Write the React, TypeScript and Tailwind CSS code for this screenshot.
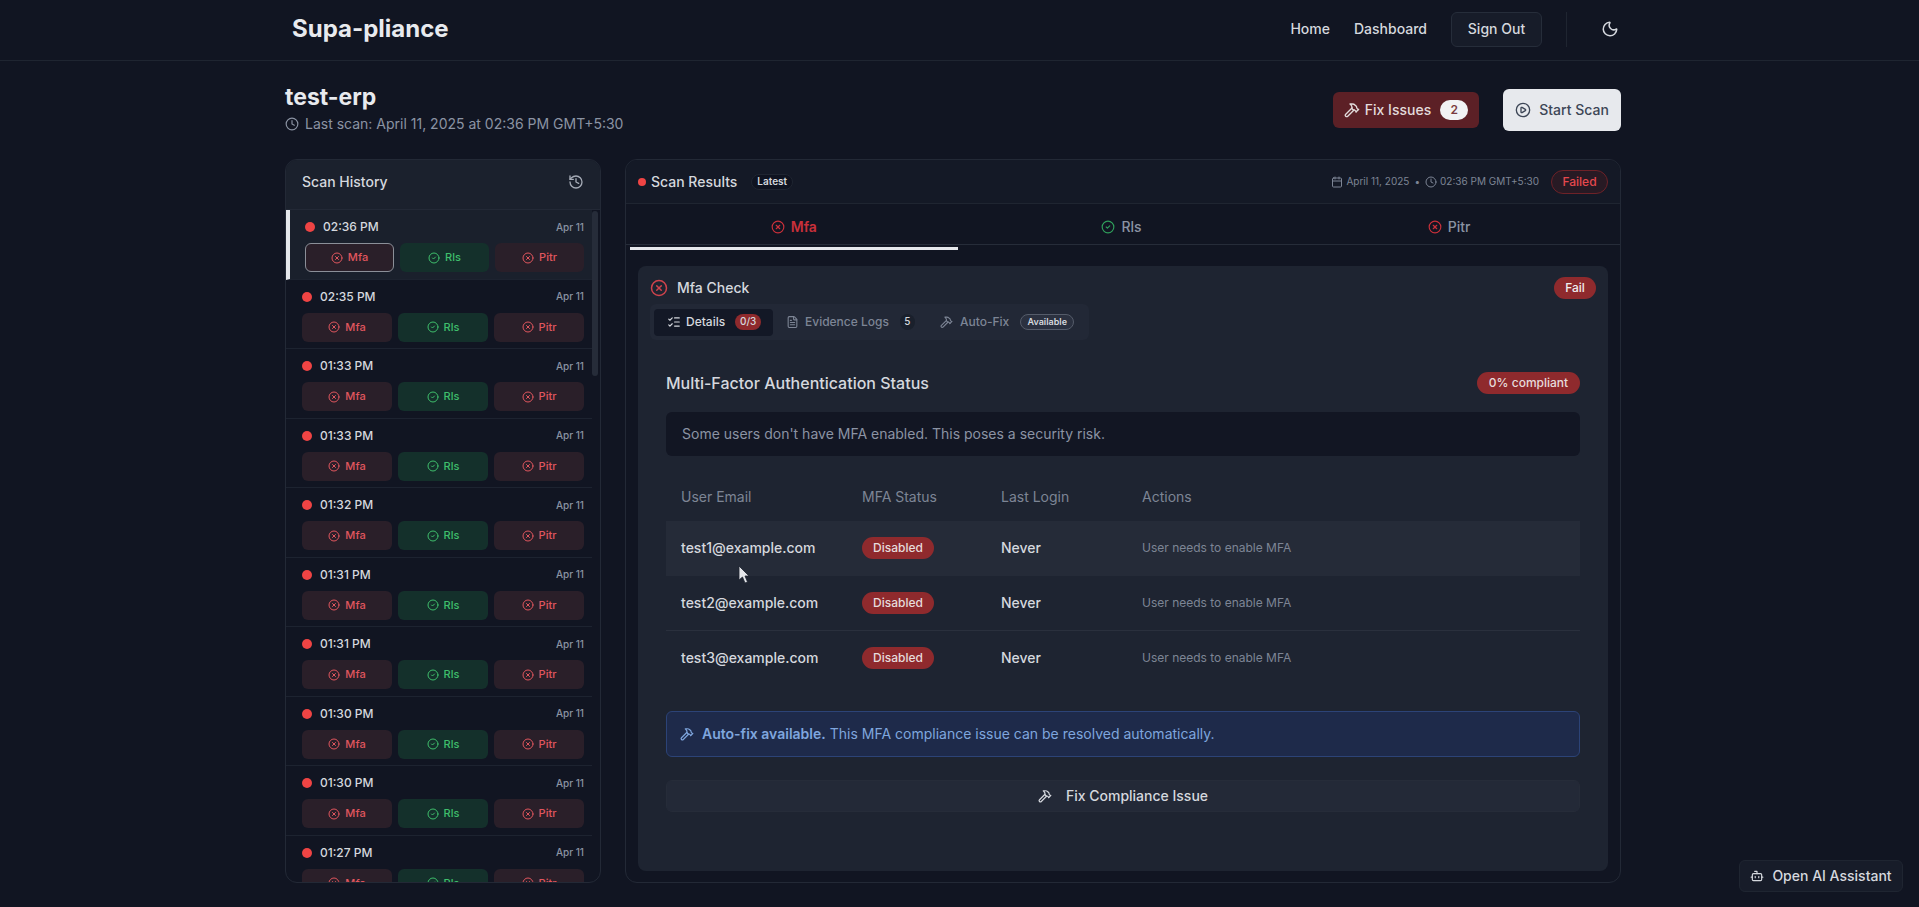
import { Bot, Calendar, CircleCheck, CirclePlay, CircleX, Clock, FileText, Hammer, History, ListChecks, Moon } from 'lucide-react';

const times = ['02:36 PM', '02:35 PM', '01:33 PM', '01:33 PM', '01:32 PM', '01:31 PM', '01:31 PM', '01:30 PM', '01:30 PM', '01:27 PM'];
const users = ['test1@example.com', 'test2@example.com', 'test3@example.com'];

const Chip = ({ label, ok, active }: { label: string; ok?: boolean; active?: boolean }) => {
  const Icon = ok ? CircleCheck : CircleX;
  return (
    <div className={`h-[29px] flex items-center justify-center gap-[5px] rounded-md text-[11px] font-medium ${ok ? 'bg-[#14302b] text-[#3fbf6c]' : 'bg-[#2a1f29] text-[#e0565e]'} ${active ? 'border border-[#8b8f98]' : ''}`}>
      <Icon className="w-3 h-3" />
      {label}
    </div>
  );
};

const App = () => {
  return (
    <div className="relative h-screen overflow-hidden bg-[#111522] text-[#e5e7eb] font-['Inter',sans-serif]">
      {/* Header */}
      <header className="h-[61px] border-b border-[#1f2531] pl-[292px] pr-[300px] pb-[2px] flex items-center justify-between">
        <div className="text-2xl font-bold text-[#e8eaee]">Supa-pliance</div>
        <nav className="flex items-center text-sm font-medium text-[#d5d8de]">
          <span className="mr-6">Home</span>
          <span className="mr-6">Dashboard</span>
          <button className="w-[91px] h-[35px] rounded-md border border-[#262d3a] bg-[#171c29] mr-6">Sign Out</button>
          <div className="w-px h-[35px] bg-[#1f2531] mr-[34px]"></div>
          <Moon className="w-[18px] h-[18px]" />
        </nav>
      </header>

      <main className="ml-[285px] w-[1336px]">
        {/* Title row */}
        <div className="h-[98px] flex items-center justify-between">
          <div className="pb-[5px]">
            <h1 className="text-[23px] font-bold leading-8 text-[#e8eaee]">test-erp</h1>
            <div className="flex items-center gap-[6px] text-sm leading-5 mt-[1px] text-[#8b93a3]">
              <Clock className="w-[14px] h-[14px]" />
              Last scan: April 11, 2025 at 02:36 PM GMT+5:30
            </div>
          </div>
          <div className="flex items-center gap-6">
            <button className="w-[146px] h-9 rounded-md bg-[#5c2026] flex items-center justify-center gap-[5px] text-sm font-medium text-[#e3dcdc]">
              <Hammer className="w-4 h-4" />
              Fix Issues
              <span className="w-7 h-5 ml-1 rounded-full bg-[#f1f2f4] text-[#7a3b40] text-xs font-semibold flex items-center justify-center">2</span>
            </button>
            <button className="w-[118px] h-[42px] rounded-md bg-[#e7e9ed] flex items-center justify-center gap-2 text-sm font-medium text-[#3d4656]">
              <CirclePlay className="w-4 h-4" />
              Start Scan
            </button>
          </div>
        </div>

        <div className="flex gap-6 h-[724px]">
          {/* Scan history */}
          <aside className="relative w-[316px] shrink-0 rounded-xl border border-[#232936] overflow-hidden flex flex-col">
            <div className="h-[50px] shrink-0 bg-[#1b212d] border-b border-[#232936] px-4 pb-[5px] flex items-center justify-between">
              <span className="text-sm font-medium text-[#d5d8de]">Scan History</span>
              <History className="w-4 h-4 text-[#a5abb6]" />
            </div>
            <div className="flex-1 overflow-hidden mr-[8px]">
              {times.map((t, i) => (
                <div key={i} className={`h-[69.5px] pr-2 pt-[9px] border-b border-[#1d2330] ${i === 0 ? 'border-l-4 border-l-[#e5e7eb] bg-[#1a202c] pl-[15px]' : 'pl-4'}`}>
                  <div className="h-[16px] flex items-center justify-between">
                    <div className="flex items-center gap-[8px] text-xs font-medium text-[#d5d8de]">
                      <span className="w-[10px] h-[10px] rounded-full bg-[#ef4444]"></span>
                      {t}
                    </div>
                    <span className="text-[10px] font-medium text-[#8b93a3]">Apr 11</span>
                  </div>
                  <div className="grid grid-cols-3 gap-[6px] mt-[8px]">
                    <Chip label="Mfa" active={i === 0} />
                    <Chip label="Rls" ok />
                    <Chip label="Pitr" />
                  </div>
                </div>
              ))}
            </div>
            <div className="absolute right-[2px] top-[51px] w-[6px] h-[165px] rounded-full bg-[#262c39]"></div>
          </aside>

          {/* Scan results */}
          <section className="flex-1 rounded-xl border border-[#232936] overflow-hidden">
            <div className="h-[44px] border-b border-[#1f2531] bg-[#141926] pl-3 pr-3 flex items-center justify-between">
              <div className="flex items-center">
                <span className="w-2 h-2 rounded-full bg-[#ef4444] mr-[5px]"></span>
                <span className="text-sm font-medium text-[#d5d8de]">Scan Results</span>
                <span className="ml-[14px] h-4 px-[5px] rounded-full bg-[#0f1320] border border-[#1f2531] text-[10px] font-semibold text-[#d5d8de] flex items-center">Latest</span>
              </div>
              <div className="flex items-center text-[10px] text-[#7d8595]">
                <Calendar className="w-3 h-3 mr-[3px]" />
                April 11, 2025
                <span className="mx-[5px]">•</span>
                <Clock className="w-3 h-3 mr-[3px]" />
                02:36 PM GMT+5:30
                <span className="ml-[12px] w-[57px] h-6 rounded-full border border-[#6e2228] bg-[#281a24] text-xs font-medium text-[#e5484d] flex items-center justify-center">Failed</span>
              </div>
            </div>
            <div className="h-[41px] border-b border-[#262c39] grid grid-cols-3 pl-[4px] pr-[7px] text-sm font-medium">
              <div className="relative flex items-center justify-center gap-[6px] pt-[6px] font-semibold text-[#c9303a]">
                <CircleX className="w-[14px] h-[14px]" />
                Mfa
                <div className="absolute left-0 right-0 -bottom-[6px] h-[3px] bg-[#e5e7eb]"></div>
              </div>
              <div className="flex items-center justify-center gap-[6px] pt-[6px] text-[#8b93a3]">
                <CircleCheck className="w-[14px] h-[14px] text-[#2f9e5b]" />
                Rls
              </div>
              <div className="flex items-center justify-center gap-[6px] pt-[6px] text-[#8b93a3]">
                <CircleX className="w-[14px] h-[14px] text-[#c9303a]" />
                Pitr
              </div>
            </div>

            {/* Check card */}
            <div className="mx-3 mt-[21px] h-[605px] rounded-lg bg-[#1e2431] pl-3 pr-3 pt-[11px]">
              <div className="h-[22px] flex items-center justify-between">
                <div className="flex items-center gap-[9px] text-sm font-medium text-[#d5d8de]">
                  <CircleX className="w-[18px] h-[18px] text-[#d0434c]" />
                  Mfa Check
                </div>
                <span className="w-[42px] h-[22px] rounded-full bg-[#8f2a2d] text-xs font-medium text-[#eee] flex items-center justify-center">Fail</span>
              </div>
              <div className="mt-[5px] w-[439px] h-[36px] rounded-md bg-[#222836] p-1 flex items-center text-xs font-medium">
                <div className="w-[119px] h-[27px] rounded bg-[#131826] flex items-center pl-[13px] text-[#d5d8de]">
                  <ListChecks className="w-[14px] h-[14px] mr-[5px]" />
                  Details
                  <span className="ml-[10px] h-4 w-[26px] rounded-full bg-[#8f2a2d] text-[10px] flex items-center justify-center">0/3</span>
                </div>
                <div className="flex items-center pl-[13px] text-[#7d8595]">
                  <FileText className="w-[13px] h-[14px] mr-[6px]" />
                  Evidence Logs
                  <span className="ml-[11px] w-[15px] h-4 rounded-full bg-[#1a202c] text-[10px] text-[#d5d8de] flex items-center justify-center">5</span>
                </div>
                <div className="flex items-center pl-[25px] text-[#7d8595]">
                  <Hammer className="w-[13px] h-[14px] mr-[7px]" />
                  Auto-Fix
                  <span className="ml-[11px] w-[54px] h-4 rounded-full bg-[#2b3140] border border-[#555c6a] text-[9px] font-semibold text-[#d5d8de] flex items-center justify-center">Available</span>
                </div>
              </div>

              <div className="pl-4 pr-[16px] w-[946px]">
                <div className="mt-[32px] h-[22px] flex items-center justify-between">
                  <h2 className="text-base font-medium text-[#d5d8de]">Multi-Factor Authentication Status</h2>
                  <span className="w-[103px] h-[22px] rounded-full bg-[#8f2a2d] text-xs font-medium text-[#e6dcdc] flex items-center justify-center">0% compliant</span>
                </div>
                <div className="mt-[18px] h-[44px] rounded-md bg-[#121623] pl-4 flex items-center text-sm text-[#8b93a3]">
                  Some users don't have MFA enabled. This poses a security risk.
                </div>

                {/* MFA table */}
                <div className="mt-[18px] h-[47px] pb-[2px] grid grid-cols-[181px_139px_141px_1fr] pl-[15px] items-center text-sm text-[#7d8595]">
                  <span>User Email</span>
                  <span>MFA Status</span>
                  <span>Last Login</span>
                  <span>Actions</span>
                </div>
                {users.map((u, i) => (
                  <div key={u} className={`h-[55px] grid grid-cols-[181px_139px_141px_1fr] pl-[15px] items-center border-b ${i === 0 ? 'bg-[#252b38] border-transparent' : i === 1 ? 'border-[#2a303d]' : 'border-transparent'}`}>
                    <span className="text-sm font-medium text-[#d5d8de]">{u}</span>
                    <span className="flex">
                      <span className="w-[72px] h-[22px] rounded-full bg-[#8f2a2d] text-xs font-medium text-[#e6dcdc] flex items-center justify-center">Disabled</span>
                    </span>
                    <span className="text-sm font-medium text-[#d5d8de]">Never</span>
                    <span className="text-xs text-[#7d8595]">User needs to enable MFA</span>
                  </div>
                ))}

                <div className="mt-[25px] h-[46px] rounded-md border border-[#2c4377] bg-[#1e2a4a] pl-[13px] flex items-center text-sm text-[#7fa6de]">
                  <Hammer className="w-[14px] h-[14px] mr-[8px]" />
                  <span className="font-semibold mr-1">Auto-fix available.</span>
                  This MFA compliance issue can be resolved automatically.
                </div>
                <button className="mt-[23px] w-[914px] h-[32px] rounded-md border border-[#262c39] bg-[#232937] flex items-center justify-center gap-[14px] text-sm font-medium text-[#d5d8de]">
                  <Hammer className="w-[14px] h-[14px]" />
                  Fix Compliance Issue
                </button>
              </div>
            </div>
          </section>
        </div>
      </main>

      {/* Mouse pointer captured in the screenshot */}
      <svg className="absolute left-[738px] top-[565px] w-[13px] h-[19px]" viewBox="0 0 13 19">
        <path d="M1 1v14l3.5-3 2.5 6 2.5-1-2.5-6H11z" fill="#e5e7eb" stroke="#1e2431" strokeWidth="0.8" />
      </svg>

      {/* Assistant button */}
      <button className="absolute left-[1739px] top-[860px] w-[164px] h-8 rounded-md border border-[#1f2531] bg-[#171c29] flex items-center justify-center gap-[8px] text-sm font-medium text-[#d5d8de]">
        <Bot className="w-[14px] h-[14px]" />
        Open AI Assistant
      </button>
    </div>
  );
};

export default App;
